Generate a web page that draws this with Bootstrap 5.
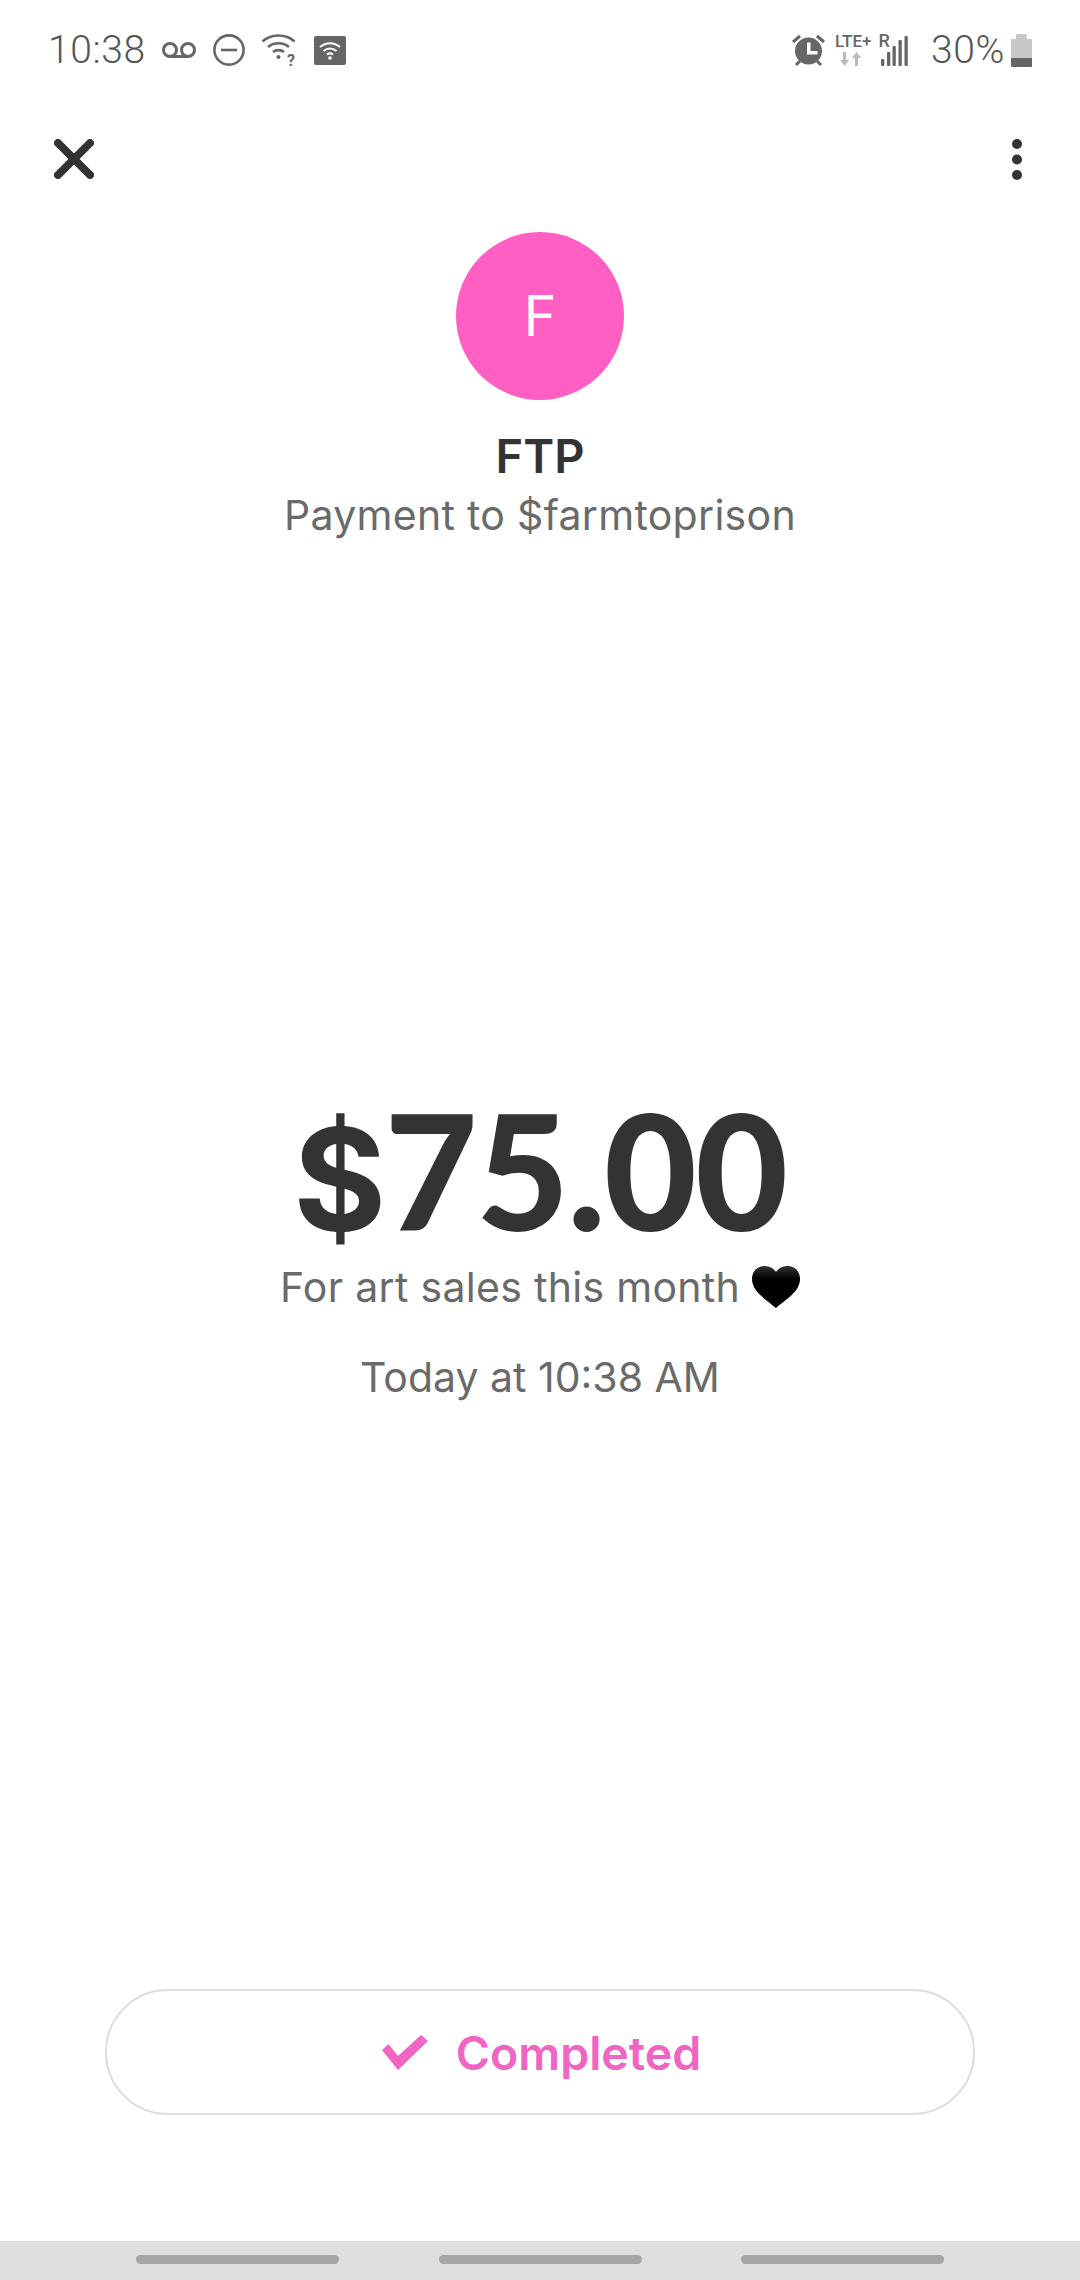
<!DOCTYPE html>
<html lang="en">
<head>
  <meta charset="UTF-8" />
  <meta name="viewport" content="width=device-width, initial-scale=1.0"/>
  <title>Payment</title>
  <link href="https://cdn.jsdelivr.net/npm/bootstrap@5.3.0/dist/css/bootstrap.min.css" rel="stylesheet"/>
  <style>
    body {
      font-family: Inter, sans-serif;
      background: #fff;
      height: 2280px;
      color: #6a6a6a;
    }
    .status-row {
      height: 100px;
      padding: 0 48px 0 48px;
      font-family: Roboto, sans-serif;
      font-size: 39px;
      font-weight: 300;
      letter-spacing: .6px;
      color: #555;
    }
    .status-left { gap: 16.5px; }
    .pct-text { margin-left: 23px; margin-right: 6px; }
    .lte-box { margin-left: 10px; }
    .tool-row {
      height: 118px;
      padding: 0 58px 0 54px;
    }
    .avatar-dot {
      width: 168px;
      height: 168px;
      margin-top: 14px;
      background: #ff5fc2;
      color: #fff;
      font-size: 56px;
      font-weight: 400;
    }
    .payee-name {
      margin-top: 28px;
      font-size: 47px;
      line-height: 56px;
      font-weight: 600;
      color: #333;
    }
    .payee-sub {
      margin-top: 7px;
      font-size: 41px;
      line-height: 48px;
      font-weight: 400;
      letter-spacing: .3px;
    }
    .amount-box { margin-top: 565px; }
    .amount-num {
      font-family: Lato, sans-serif;
      font-size: 160px;
      line-height: 130px;
      font-weight: 900;
      letter-spacing: -1.5px;
      color: #333;
    }
    .amount-cur {
      font-family: Inter, sans-serif;
      font-size: 142px;
      line-height: 0;
      font-weight: 700;
    }
    .amount-note {
      margin-top: 29px;
      font-size: 41px;
      line-height: 48px;
      font-weight: 400;
      letter-spacing: .3px;
      gap: 12px;
    }
    .amount-date {
      margin-top: 42px;
      font-size: 41px;
      line-height: 48px;
      font-weight: 400;
    }
    .done-pill {
      width: 870px;
      height: 126px;
      margin: auto auto 126px;
      padding-left: 3px;
      border: 2px solid #dcdcdc;
      border-radius: 63px;
      gap: 28px;
      color: #f065c3;
      font-size: 46.5px;
      line-height: 60px;
      font-weight: 600;
    }
    .done-label { margin-top: 2px; }
    .nav-strip {
      height: 39px;
      background: #dfdfdf;
      padding: 0 136px;
    }
    .nav-handle {
      width: 203px;
      height: 9px;
      margin-bottom: 3px;
      border-radius: 5px;
      background: #a6a6a6;
    }
  </style>
</head>
<body class="d-flex flex-column">

<div class="status-row d-flex align-items-center justify-content-between">
  <div class="status-left d-flex align-items-center">
    <span>10:38</span>
    <svg width="34" height="17" viewBox="0 0 34 17" fill="none" stroke="#666" stroke-width="3"><circle cx="8" cy="8" r="6.5"/><circle cx="26" cy="8" r="6.5"/><path d="M8 14.500h18"/></svg>
    <svg width="32" height="32" viewBox="0 0 32 32" fill="none" stroke="#666" stroke-width="2.6"><circle cx="16" cy="16" r="14.6"/><path d="M8 16h16"/></svg>
    <svg width="36" height="40" viewBox="0 -4 36 40" fill="none" stroke="#666" stroke-width="2.6"><path d="M1.500 7.500C10 -.5 25 -.5 33.500 7.500"/><path d="M7 13c6-5 15-5 21 0"/><path d="M12 18c3-2.500 8-2.500 11 0"/><circle cx="17.500" cy="23" r="2" fill="#666" stroke="none"/><text x="26" y="32" font-family="Roboto, sans-serif" font-size="16" font-weight="700" fill="#666" stroke="none">?</text></svg>
    <svg width="32" height="29" viewBox="0 0 32 29" fill="none"><rect width="32" height="29" rx="2" fill="#666"/><g stroke="#fff" stroke-width="2"><path d="M6 11c6-5 14-5 20 0"/><path d="M9.500 15c4-3 9-3 13 0"/></g><path d="M13 18.500c2-1.500 4-1.500 6 0" stroke="#fff" stroke-width="2"/><circle cx="16" cy="22" r="1.800" fill="#fff"/></svg>
  </div>
  <div class="d-flex align-items-center">
    <svg width="33" height="32" viewBox="0 0 33 32"><circle cx="16.500" cy="17" r="13.500" fill="#666"/><path d="M15 8.500h3.500v8.500h7v3.500H15z" fill="#fff"/><g stroke="#666" stroke-width="3" fill="none"><path d="M1 8l7-6"/><path d="M32 8l-7-6"/><path d="M4 31l4-4"/><path d="M29 31l-4-4"/></g></svg>
    <svg class="lte-box" width="73" height="42" viewBox="0 -4 73 42" fill="#666">
      <text x="0" y="14" font-family="Roboto, sans-serif" font-size="17" font-weight="500" letter-spacing="0">LTE+</text>
      <text x="43.500" y="14" font-family="Roboto, sans-serif" font-size="18" font-weight="500" letter-spacing="0">R</text>
      <path d="M8 19h3v8h3l-4.500 6L5 27h3z" fill="#bbb"/>
      <path d="M20 33v-8h-3l4.500-6 4.500 6h-3v8z" fill="#bbb"/>
      <rect x="46" y="26" width="3.300" height="7" rx="1"/><rect x="52" y="19" width="3.300" height="14" rx="1"/><rect x="57.500" y="13" width="3.300" height="20" rx="1"/><rect x="63.500" y="7" width="3.300" height="26" rx="1"/><rect x="69.500" y="3" width="3.300" height="30" rx="1"/>
    </svg>
    <span class="pct-text">30%</span>
    <svg width="21" height="33" viewBox="0 0 21 33"><rect x="5" y="0" width="11" height="6" rx="1.500" fill="#c8c8c8"/><rect x="0" y="5" width="21" height="19" fill="#c8c8c8"/><path d="M0 24h21v8a1 1 0 0 1-1 1H1a1 1 0 0 1-1-1z" fill="#666"/></svg>
  </div>
</div>

<div class="tool-row d-flex align-items-center justify-content-between">
  <svg width="40" height="40" viewBox="0 0 40 40" stroke="#333" stroke-width="8" stroke-linecap="round"><path d="M4 4l32 32"/><path d="M36 4L4 36"/></svg>
  <svg width="10" height="41" viewBox="0 0 10 41" fill="#333"><circle cx="5" cy="5" r="5"/><circle cx="5" cy="20.500" r="5"/><circle cx="5" cy="36" r="5"/></svg>
</div>

<div class="d-flex flex-column align-items-center text-center">
  <div class="avatar-dot rounded-circle d-flex align-items-center justify-content-center">F</div>
  <div class="payee-name">FTP</div>
  <div class="payee-sub">Payment to $farmtoprison</div>
</div>

<div class="amount-box d-flex flex-column align-items-center text-center">
  <div class="amount-num"><span class="amount-cur">$</span>75.00</div>
  <div class="amount-note d-flex align-items-center">
    <span>For art sales this month</span>
    <svg width="48" height="42" viewBox="0 0 48 42"><defs><linearGradient id="heartFill" x1="0" y1="0" x2="0" y2="1"><stop offset="0" stop-color="#333"/><stop offset=".3" stop-color="#000"/></linearGradient></defs><path d="M24 42C15 34 0 26 0 13 0 5 5.500 0 12.500 0 17.500 0 21.500 2 24 6 26.500 2 30.500 0 35.500 0 42.500 0 48 5 48 13 48 26 33 34 24 42z" fill="url(#heartFill)"/></svg>
  </div>
  <div class="amount-date">Today at 10:38 AM</div>
</div>

<div class="done-pill d-flex align-items-center justify-content-center">
  <svg width="46" height="35" viewBox="0 0 46 35" fill="#f065c3"><path d="M0 15l6.500-6L16 21 39 0l7 6-30 29z"/></svg>
  <span class="done-label">Completed</span>
</div>

<div class="nav-strip d-flex align-items-center justify-content-between">
  <div class="nav-handle"></div>
  <div class="nav-handle"></div>
  <div class="nav-handle"></div>
</div>

</body>
</html>
